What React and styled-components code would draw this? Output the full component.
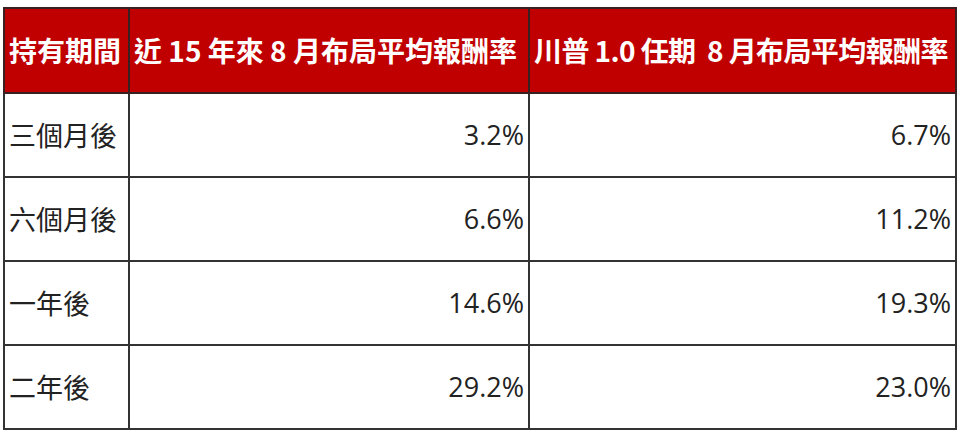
import React from "react"
import styled, { createGlobalStyle } from "styled-components"

const GlobalStyle = createGlobalStyle`
  html, body {
    margin: 0;
    background: #ffffff;
  }
`

const ROWS = [
  { period: '三個月後', recent: '3.2%', trump: '6.7%' },
  { period: '六個月後', recent: '6.6%', trump: '11.2%' },
  { period: '一年後', recent: '14.6%', trump: '19.3%' },
  { period: '二年後', recent: '29.2%', trump: '23.0%' }
]

const Page = styled.div`
  padding: 7px 5px 0 3px;
  width: 960px;
  height: 434px;
  box-sizing: border-box;
`

const Table = styled.table`
  border-collapse: collapse;
  width: 952px;
  table-layout: fixed;
  font-family: "Open Sans", "Noto Sans CJK TC", sans-serif;
`

const Col = styled.col`
  width: ${p => p.$w}px;
`

const HeadCell = styled.th`
  background: #c00000;
  color: #ffffff;
  height: 83px;
  padding: 0 0 0 4px;
  border: 2px solid #3a2020;
  font-family: "Noto Sans CJK TC", sans-serif;
  font-size: 28px;
  line-height: 1.2;
  font-weight: 700;
  text-align: left;
  white-space: nowrap;
  overflow: hidden;
  letter-spacing: ${p => p.$spacing || 0}px;
`

const Cell = styled.td`
  height: 82px;
  padding: 0 4px;
  border: 2px solid #333333;
  color: #222222;
  font-size: 27px;
  line-height: 1.2;
  font-weight: 400;
  text-align: ${p => p.$align || 'right'};
  font-family: ${p => p.$cjk ? '"Noto Sans CJK TC", sans-serif' : '"Open Sans", sans-serif'};
  white-space: nowrap;
`

const App = () => (
  <>
    <GlobalStyle />
    <Page>
      <Table>
        <colgroup>
          <Col $w={125} />
          <Col $w={400} />
          <Col $w={427} />
        </colgroup>
        <thead>
          <tr>
            <HeadCell>持有期間</HeadCell>
            <HeadCell>近 15 年來 8 月布局平均報酬率</HeadCell>
            <HeadCell $spacing={-0.6}>川普 1.0 任期&nbsp; 8 月布局平均報酬率</HeadCell>
          </tr>
        </thead>
        <tbody>
          {ROWS.map(row => (
            <tr key={row.period}>
              <Cell $align="left" $cjk>{row.period}</Cell>
              <Cell>{row.recent}</Cell>
              <Cell>{row.trump}</Cell>
            </tr>
          ))}
        </tbody>
      </Table>
    </Page>
  </>
)

export default App
